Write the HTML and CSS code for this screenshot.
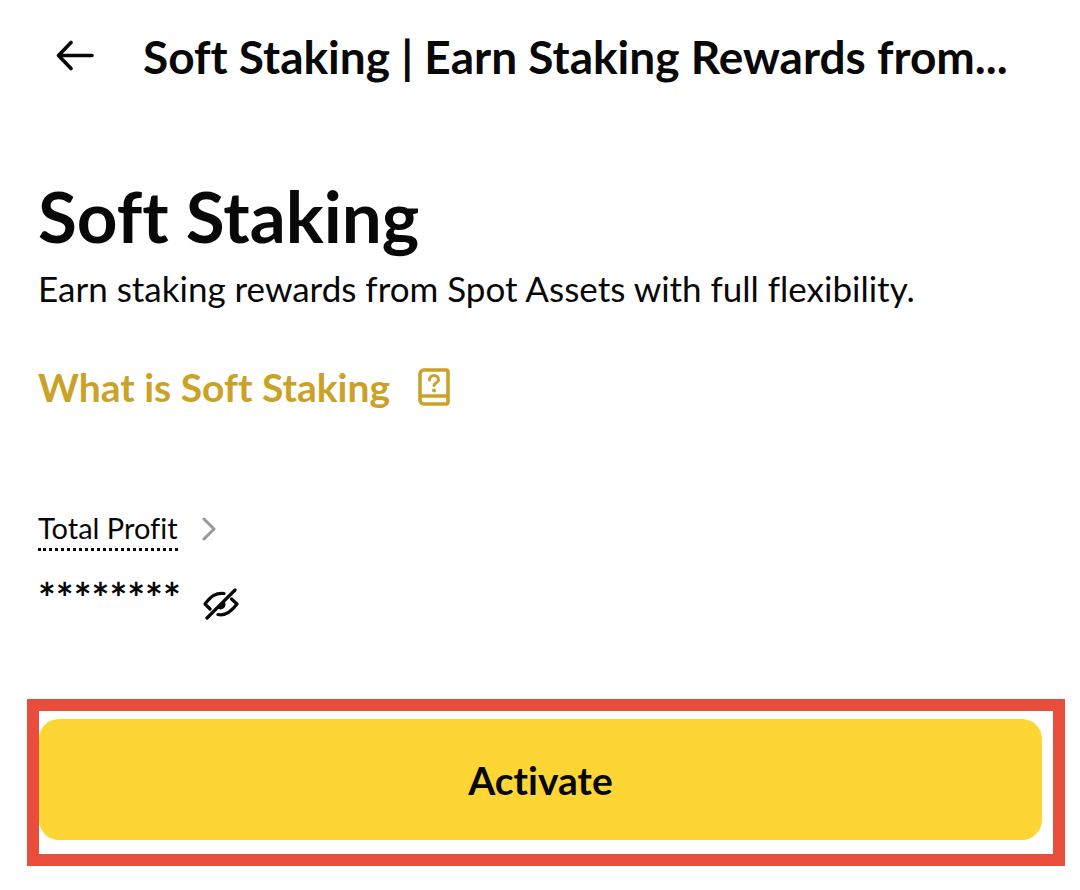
FILE: index.html
```html
<!DOCTYPE html>
<html lang="en">
<head>
  <meta charset="UTF-8">
  <title>Soft Staking</title>
  <meta name="viewport" content="width=device-width, initial-scale=1.0">
  <link rel="stylesheet" href="styles.css">
</head>
<body>

<header class="topbar">
  <button class="icon-button" type="button" aria-label="Back">
    <svg width="40" height="32" viewBox="0 0 40 32" fill="none" stroke="currentColor" stroke-width="3.6" stroke-linecap="round" stroke-linejoin="round">
      <path d="M37 15.500H3.500M16 2.500L3.500 15.500l12.500 13"/>
    </svg>
  </button>
  <div class="topbar-title">Soft Staking | Earn Staking Rewards from...</div>
</header>

<main>
  <section class="intro">
    <h1>Soft Staking</h1>
    <p>Earn staking rewards from Spot Assets with full flexibility.</p>
    <a class="help-link" href="#">
      What is Soft Staking
      <svg width="32" height="38" viewBox="0 0 32 38" fill="none" stroke="currentColor" stroke-width="3.6" stroke-linecap="round" stroke-linejoin="round">
        <path d="M6 2h22a2 2 0 0 1 2 2v30a2 2 0 0 1-2 2H6a4 4 0 0 1-4-4V6a4 4 0 0 1 4-4zM2 28h28"/>
        <path d="M11.500 12c0-6 9-6 9 0 0 3-4.500 3-4.500 5.500" stroke-width="3"/>
        <circle cx="16" cy="22.500" r="2" fill="currentColor" stroke="none"/>
      </svg>
    </a>
  </section>

  <section class="profit">
    <a class="profit-link" href="#">
      <span class="profit-label">Total Profit</span>
      <svg width="14" height="26" viewBox="0 0 14 26" fill="none" stroke="#999" stroke-width="3" stroke-linecap="round" stroke-linejoin="round">
        <path d="M2 2l10 10L2 22"/>
      </svg>
    </a>
    <div class="profit-row">
      <span class="profit-value">********</span>
      <button class="icon-button" type="button" aria-label="Show profit">
        <svg width="36" height="32" viewBox="0 0 36 32" fill="none" stroke="currentColor" stroke-width="3.2" stroke-linecap="round" stroke-linejoin="round">
          <path d="M21 5.500C13 4.500 8 8 2 16l5 5M28.500 11l5.500 5c-6 8-12 12-19 10.500"/>
          <path d="M32 2L4 30"/>
          <path d="M21 13l-7 7a3.500 3.500 0 0 0 7-7z" fill="currentColor" stroke="none"/>
        </svg>
      </button>
    </div>
  </section>

  <div class="highlight">
    <button class="activate" type="button">Activate</button>
  </div>
</main>

</body>
</html>
```

FILE: styles.css
```css
* {
  box-sizing: border-box;
}
body {
  margin: 0;
  font-family: Lato, "Open Sans", sans-serif;
  font-variant-ligatures: none;
  background: #fff;
  color: #080808;
}
h1, p {
  margin: 0;
}
a {
  color: inherit;
  text-decoration: none;
}
svg {
  display: block;
  flex-shrink: 0;
}
.icon-button {
  padding: 0;
  border: none;
  background: none;
  color: inherit;
  cursor: pointer;
}
.topbar {
  display: flex;
  align-items: center;
  gap: 48px;
  height: 112px;
  padding: 0 55px;
}
.topbar-title {
  font-size: 46px;
  font-weight: 700;
  white-space: nowrap;
}
.intro {
  padding: 60px 38px 0;
}
h1 {
  font-size: 71px;
  font-weight: 700;
  line-height: 88px;
}
.intro p {
  font-size: 35px;
  line-height: 56px;
}
.help-link {
  display: inline-flex;
  align-items: center;
  gap: 28px;
  margin-top: 47px;
  color: #c9a227;
  font-size: 39px;
  font-weight: 700;
  line-height: 48px;
}
.profit {
  padding: 97px 38px 0;
}
.profit-link {
  display: inline-flex;
  align-items: center;
  gap: 24px;
}
.profit-label {
  border-bottom: 3px dotted #080808;
  font-size: 29px;
  line-height: 40px;
}
.profit-row {
  display: flex;
  align-items: flex-end;
  gap: 22px;
  margin-top: 25px;
}
.profit-value {
  font-size: 42px;
  font-weight: 700;
  line-height: 44px;
}
.highlight {
  margin: 79px 15px 24px 27px;
  padding: 8px 11px 14px 0;
  border: 12px solid #e94e3d;
}
.activate {
  display: block;
  width: 100%;
  height: 121px;
  border: none;
  border-radius: 20px;
  background: #fdd535;
  color: #080808;
  font: inherit;
  font-size: 39px;
  font-weight: 700;
  cursor: pointer;
}
```
